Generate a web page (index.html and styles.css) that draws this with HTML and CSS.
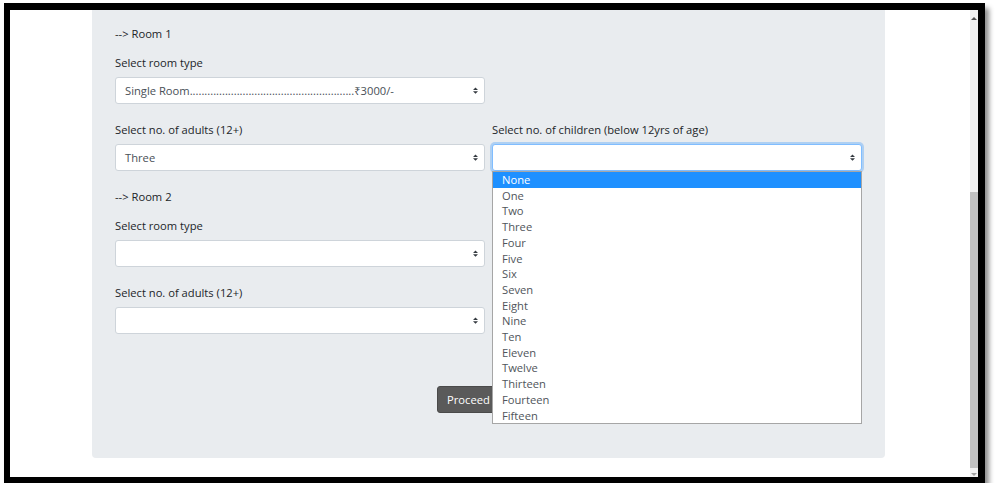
FILE: index.html
```html
<!DOCTYPE html>
<html lang="en">
<head>
<meta charset="utf-8">
<title>Room booking</title>
<link rel="stylesheet" href="styles.css">
</head>
<body>
<div class="frame">
  <div class="page">
    <div class="card">
      <div class="heading">--&gt; Room 1</div>
      <div class="row">
        <div class="col">
          <span class="label">Select room type</span>
          <div class="select"><span>Single Room........................................................₹3000/-</span><svg class="caret" width="5" height="7" viewBox="0 0 4 5"><path d="M2 0L0 2h4zm0 5L0 3h4z" fill="#343a40"/></svg></div>
        </div>
      </div>
      <div class="row">
        <div class="col">
          <span class="label">Select no. of adults (12+)</span>
          <div class="select"><span>Three</span><svg class="caret" width="5" height="7" viewBox="0 0 4 5"><path d="M2 0L0 2h4zm0 5L0 3h4z" fill="#343a40"/></svg></div>
        </div>
        <div class="col">
          <span class="label">Select no. of children (below 12yrs of age)</span>
          <div class="select focused"><span></span><svg class="caret" width="5" height="7" viewBox="0 0 4 5"><path d="M2 0L0 2h4zm0 5L0 3h4z" fill="#343a40"/></svg></div>
          <ul class="listbox">
            <li class="opt active">None</li>
            <li class="opt">One</li>
            <li class="opt">Two</li>
            <li class="opt">Three</li>
            <li class="opt">Four</li>
            <li class="opt">Five</li>
            <li class="opt">Six</li>
            <li class="opt">Seven</li>
            <li class="opt">Eight</li>
            <li class="opt">Nine</li>
            <li class="opt">Ten</li>
            <li class="opt">Eleven</li>
            <li class="opt">Twelve</li>
            <li class="opt">Thirteen</li>
            <li class="opt">Fourteen</li>
            <li class="opt">Fifteen</li>
          </ul>
        </div>
      </div>

      <div class="heading">--&gt; Room 2</div>
      <div class="row">
        <div class="col">
          <span class="label">Select room type</span>
          <div class="select"><span></span><svg class="caret" width="5" height="7" viewBox="0 0 4 5"><path d="M2 0L0 2h4zm0 5L0 3h4z" fill="#343a40"/></svg></div>
        </div>
      </div>
      <div class="row">
        <div class="col">
          <span class="label">Select no. of adults (12+)</span>
          <div class="select"><span></span><svg class="caret" width="5" height="7" viewBox="0 0 4 5"><path d="M2 0L0 2h4zm0 5L0 3h4z" fill="#343a40"/></svg></div>
        </div>
        <div class="col obscured">
          <span class="label">Select no. of children (below 12yrs of age)</span>
          <div class="select"><span></span><svg class="caret" width="5" height="7" viewBox="0 0 4 5"><path d="M2 0L0 2h4zm0 5L0 3h4z" fill="#343a40"/></svg></div>
        </div>
      </div>

      <div class="actions">
        <button class="btn" type="button">Proceed &gt;&gt;</button>
      </div>
    </div>
  </div>
  <div class="scrollbar">
    <div class="sb-up"><span class="tri-up"></span></div>
    <div class="sb-thumb"></div>
    <div class="sb-down"><span class="tri-down"></span></div>
  </div>
</div>
</body>
</html>
```

FILE: styles.css
```css
body {
  margin: 0;
  background: #fff;
  font-family: "Open Sans", "Noto Sans", sans-serif;
  font-size: 11.2px;
  color: #212529;
}

.frame {
  margin: 3px 0 0 4px;
  width: 968px;
  height: 467px;
  border-style: solid;
  border-color: #000;
  border-width: 7px 7px 6px 6px;
  box-shadow: 4px 5px 5px rgba(0, 0, 0, 0.45);
  display: flex;
  overflow: hidden;
  background: #fff;
}

.page {
  flex: 1;
  overflow: hidden;
  background: #fff;
}

.card {
  margin-left: 82px;
  width: 747px;
  height: 433px;
  padding: 15px 23px 0;
  background: #e9ecef;
  border-radius: 0 0 4px 4px;
}

.heading {
  line-height: 18px;
  margin-bottom: 11px;
}

.row {
  display: flex;
  gap: 7px;
  margin-bottom: 17px;
}

.col {
  width: 370px;
  position: relative;
}

.col.obscured {
  visibility: hidden;
}

.label {
  display: block;
  line-height: 17px;
  margin-bottom: 6px;
}

.select {
  height: 27px;
  box-sizing: border-box;
  border: 1px solid #ced4da;
  border-radius: 3px;
  background: #fff;
  display: flex;
  align-items: center;
  justify-content: space-between;
  padding: 0 6px 0 9px;
  color: #495057;
  white-space: nowrap;
}

.select.focused {
  border-color: #80bdff;
  box-shadow: 0 0 0 2px rgba(0, 123, 255, 0.25);
}

.caret {
  flex: none;
}

.listbox {
  position: absolute;
  left: 0;
  top: 100%;
  width: 370px;
  box-sizing: border-box;
  margin: 0;
  padding: 0;
  list-style: none;
  background: #fff;
  border: 1px solid #a6a6a6;
  z-index: 2;
}

.opt {
  line-height: 15.7px;
  padding-left: 9px;
  color: #50555b;
}

.opt.active {
  background: #1e90ff;
  color: #fff;
}

.actions {
  margin-top: 52px;
  padding-left: 322px;
}

.btn {
  font-family: inherit;
  font-size: 11.2px;
  height: 27px;
  padding: 0 9px;
  border: 1px solid #4a4a4a;
  border-radius: 3px;
  background: #5a5a5a;
  color: #fff;
  line-height: 17px;
}

.scrollbar {
  width: 8px;
  background: #f1f1f1;
  display: flex;
  flex-direction: column;
}

.sb-up {
  height: 16px;
  display: flex;
  align-items: center;
  justify-content: center;
}

.tri-up {
  width: 0;
  height: 0;
  border-left: 3px solid transparent;
  border-right: 3px solid transparent;
  border-bottom: 3px solid #505050;
}

.sb-thumb {
  margin-top: 166px;
  height: 276px;
  background: #c1c1c1;
}

.sb-down {
  height: 9px;
  display: flex;
  align-items: flex-end;
  justify-content: center;
  padding-bottom: 1px;
  box-sizing: border-box;
}

.tri-down {
  width: 0;
  height: 0;
  border-left: 3px solid transparent;
  border-right: 3px solid transparent;
  border-top: 3px solid #a0a0a0;
}
```
